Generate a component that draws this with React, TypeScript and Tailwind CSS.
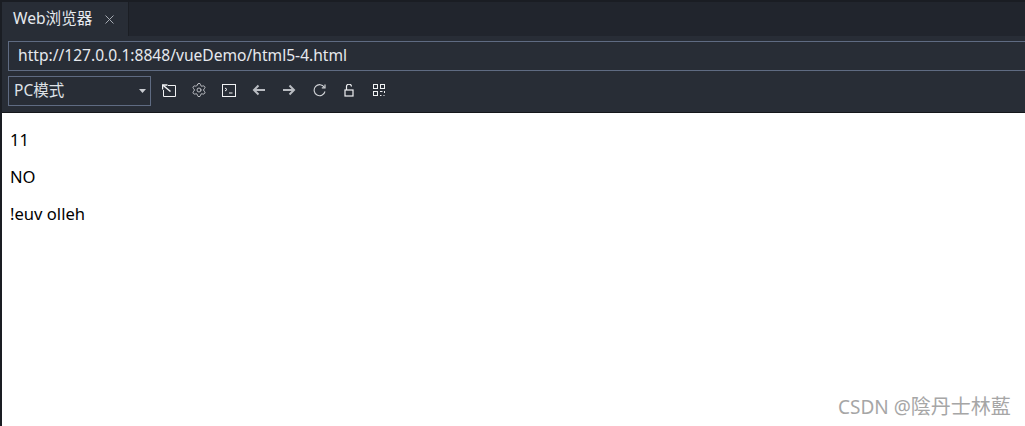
import { Settings } from 'lucide-react';

const sans = 'font-["Noto_Sans","Noto_Sans_CJK_SC",sans-serif]';

function ToolIcon({ children }: { children: React.ReactNode }) {
  return (
    <span className="flex w-[30px] h-[16px] items-center justify-center">
      {children}
    </span>
  );
}

export default function App() {
  return (
    <div className={`${sans} relative flex h-[426px] w-[1025px] overflow-hidden bg-white`}>
      <div className="w-[2px] shrink-0 bg-[#1a1d23]" />
      <div className="flex min-w-0 flex-1 flex-col">
        <div className="h-[112px] shrink-0 bg-[#282d36]">
          <div className="flex h-[36px] border-t-[2px] border-[#1a1d23] bg-[#21252d]">
            <div className="flex w-[127px] items-center border-r border-[#1b1e24] bg-[#282d36] pl-[11px] text-[15.6px] text-[#e6e9ee]">
              Web浏览器
              <svg className="ml-[13px]" width="9" height="9" viewBox="0 0 9 9" fill="none" stroke="#a6abb3" strokeWidth="1">
                <path d="M0.5 0.5l8 8M8.5 0.5l-8 8" />
              </svg>
            </div>
          </div>
          <div className="ml-[6px] mt-[5px] flex h-[30px] items-center border border-r-0 border-[#5f6b82] pl-[9px] text-[15.6px] text-[#e6e9ee]">
            http://127.0.0.1:8848/vueDemo/html5-4.html
          </div>
          <div className="ml-[6px] mt-[5px] flex h-[30px] items-center">
            <div className="flex h-[30px] w-[143px] items-center justify-between border border-[#5f6b82] pl-[5px] pr-[4px] text-[15.5px] text-[#dfe2e7]">
              PC模式
              <svg width="7" height="4" viewBox="0 0 7 4" fill="#c9ccd1">
                <path d="M0 0h7L3.5 4z" />
              </svg>
            </div>
            <div className="mb-[2px] ml-[3px] flex items-center">
              <ToolIcon>
                <svg width="14" height="13" viewBox="0 0 14 13" fill="none" stroke="#f0f1f3" strokeWidth="1">
                  <path d="M6 1.5H13.5V12.5H1.5V6" />
                  <path d="M0.5 1H5.5L0.5 1V5.5" strokeWidth="1.5" />
                  <path d="M1 1.2L8.5 7.5" strokeWidth="1.5" />
                </svg>
              </ToolIcon>
              <ToolIcon>
                <Settings size={16} strokeWidth={1.25} color="#d2d4d8" />
              </ToolIcon>
              <ToolIcon>
                <svg width="14" height="13" viewBox="0 0 14 13" fill="none" stroke="#f0f1f3" strokeWidth="1">
                  <rect x="0.5" y="0.5" width="13" height="12" />
                  <path d="M3 4l2 1.5L3 7M7 9h3.5" />
                </svg>
              </ToolIcon>
              <ToolIcon>
                <svg width="14" height="12" viewBox="0 0 14 12" fill="none" stroke="#b9bcc2" strokeWidth="2">
                  <path d="M13 6H2M6.5 1.5L2 6l4.5 4.5" />
                </svg>
              </ToolIcon>
              <ToolIcon>
                <svg width="14" height="12" viewBox="0 0 14 12" fill="none" stroke="#b9bcc2" strokeWidth="2">
                  <path d="M1 6h11M7.5 1.5L12 6l-4.5 4.5" />
                </svg>
              </ToolIcon>
              <ToolIcon>
                <svg width="13" height="13" viewBox="0 0 13 13" fill="none" stroke="#d2d4d8" strokeWidth="1.1">
                  <path d="M11.3 3.2A5.5 5.5 0 1 0 12 7.5" />
                  <path d="M12 0.5V3.8H8.8" strokeWidth="1.2" />
                </svg>
              </ToolIcon>
              <ToolIcon>
                <svg width="10" height="13" viewBox="0 0 10 13" fill="none" stroke="#f0f1f3" strokeWidth="1.2">
                  <rect x="1" y="6" width="8" height="6" />
                  <path d="M2.5 6V3a2.5 2.5 0 0 1 5-.5" />
                </svg>
              </ToolIcon>
              <ToolIcon>
                <svg width="12" height="12" viewBox="0 0 12 12" fill="none" stroke="#f0f1f3" strokeWidth="1">
                  <rect x="0.5" y="0.5" width="4" height="4" />
                  <rect x="7.5" y="0.5" width="4" height="4" />
                  <rect x="0.5" y="7.5" width="4" height="4" />
                  <path d="M7 7.5h2.5M11.5 7v2M7 11.5h1.5M10.5 11.5h1" />
                </svg>
              </ToolIcon>
            </div>
          </div>
        </div>
        <div className="h-px bg-[#15171b]" />
        <div className="px-[8px] pt-[16px] text-[16.6px] leading-[22px] text-black">
          <p>11</p>
          <p className="mt-[15px]">NO</p>
          <p className="mt-[15px]">!euv olleh</p>
        </div>
      </div>
      <div className="absolute left-[838px] top-[394px] text-[19px] leading-[25px] whitespace-nowrap text-[#a6a6a6]">
        CSDN @<span className="text-[20px]">陰丹士林藍</span>
      </div>
    </div>
  );
}
